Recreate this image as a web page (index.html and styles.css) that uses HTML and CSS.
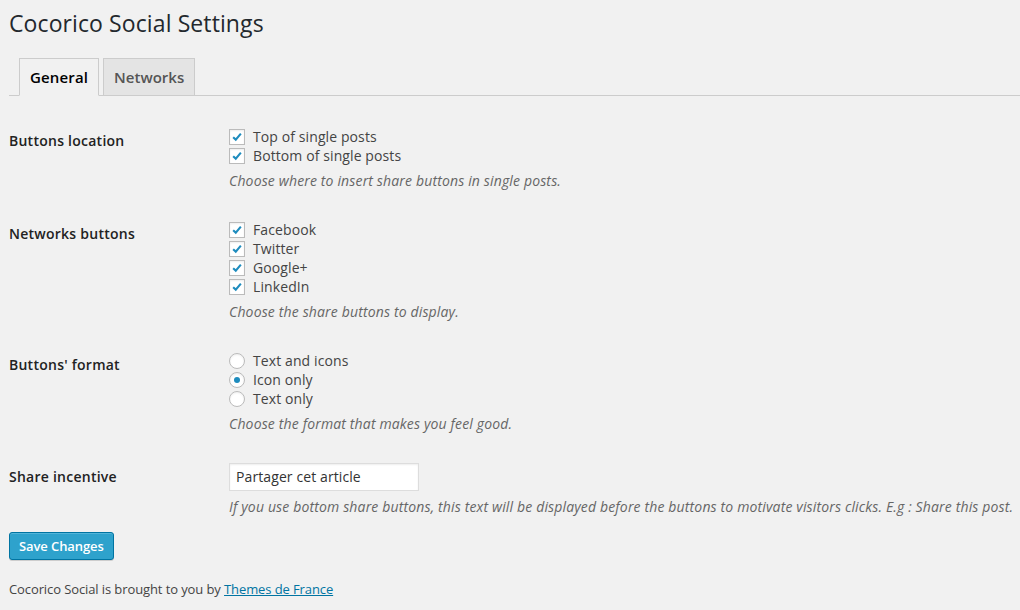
FILE: index.html
```html
<!DOCTYPE html>
<html>
<head>
<meta charset="utf-8">
<link rel="stylesheet" href="styles.css">
</head>
<body>
<div class="wrap">
  <h2 class="title">Cocorico Social Settings</h2>
  <div class="tabs">
    <span class="tab active">General</span>
    <span class="tab">Networks</span>
  </div>
  <table class="form-table">
    <tr>
      <th>Buttons location</th>
      <td>
        <div class="opt"><span class="cb"><svg viewBox="0 0 16 16"><path d="M3.6 8.2 L6.6 11 L12.4 4.2" /></svg></span>Top of single posts</div>
        <div class="opt"><span class="cb"><svg viewBox="0 0 16 16"><path d="M3.6 8.2 L6.6 11 L12.4 4.2" /></svg></span>Bottom of single posts</div>
        <p class="desc">Choose where to insert share buttons in single posts.</p>
      </td>
    </tr>
    <tr>
      <th>Networks buttons</th>
      <td>
        <div class="opt"><span class="cb"><svg viewBox="0 0 16 16"><path d="M3.6 8.2 L6.6 11 L12.4 4.2" /></svg></span>Facebook</div>
        <div class="opt"><span class="cb"><svg viewBox="0 0 16 16"><path d="M3.6 8.2 L6.6 11 L12.4 4.2" /></svg></span>Twitter</div>
        <div class="opt"><span class="cb"><svg viewBox="0 0 16 16"><path d="M3.6 8.2 L6.6 11 L12.4 4.2" /></svg></span>Google+</div>
        <div class="opt"><span class="cb"><svg viewBox="0 0 16 16"><path d="M3.6 8.2 L6.6 11 L12.4 4.2" /></svg></span>LinkedIn</div>
        <p class="desc">Choose the share buttons to display.</p>
      </td>
    </tr>
    <tr>
      <th>Buttons' format</th>
      <td>
        <div class="opt"><span class="rb"></span>Text and icons</div>
        <div class="opt"><span class="rb on"></span>Icon only</div>
        <div class="opt"><span class="rb"></span>Text only</div>
        <p class="desc">Choose the format that makes you feel good.</p>
      </td>
    </tr>
    <tr>
      <th>Share incentive</th>
      <td>
        <div class="input">Partager cet article</div>
        <p class="desc desc-input">If you use bottom share buttons, this text will be displayed before the buttons to motivate visitors clicks. E.g : Share this post.</p>
      </td>
    </tr>
  </table>
  <div class="submit"><span class="button">Save Changes</span></div>
  <p class="footer">Cocorico Social is brought to you by <a href="#">Themes de France</a></p>
</div>
</body>
</html>
```
FILE: styles.css
```css
html, body {
  margin: 0;
  padding: 0;
  background: #f1f1f1;
}
body {
  font-family: "Open Sans", "Liberation Sans", sans-serif;
  color: #444;
  font-size: 13px;
}
.wrap {
  padding: 0 0 0 9px;
}
.title {
  margin: 0;
  padding: 9px 15px 4px 0;
  font-size: 23px;
  font-weight: 400;
  line-height: 29px;
  color: #23282d;
  letter-spacing: 0.1px;
}
.tabs {
  display: flex;
  gap: 4px;
  padding: 16px 0 0 10px;
  border-bottom: 1px solid #ccc;
}
.tab {
  display: block;
  padding: 6px 10px;
  font-size: 15px;
  font-weight: 600;
  line-height: 24px;
  border: 1px solid #ccc;
  background: #e4e4e4;
  color: #555;
  margin-bottom: -1px;
}
.tab.active {
  background: #f1f1f1;
  color: #000;
  border-bottom-color: #f1f1f1;
  letter-spacing: 0.15px;
}
.form-table {
  border-collapse: collapse;
  margin-top: 16px;
  width: 1011px;
}
.form-table th {
  width: 200px;
  padding: 20px 10px 20px 0;
  text-align: left;
  vertical-align: top;
  font-size: 14px;
  font-weight: 600;
  line-height: 1.3;
  color: #222;
  letter-spacing: 0.25px;
}
.form-table td {
  padding: 15px 0 15px 10px;
  vertical-align: top;
  font-size: 14px;
}
.opt {
  display: flex;
  align-items: center;
  height: 19px;
  line-height: 19px;
  color: #444;
  letter-spacing: 0.1px;
}
.cb, .rb {
  box-sizing: border-box;
  width: 16px;
  height: 16px;
  border: 1px solid #bbb;
  background: #fff;
  margin-right: 8px;
  flex: none;
  box-shadow: inset 0 1px 2px rgba(0,0,0,0.07);
  display: flex;
  align-items: center;
  justify-content: center;
}
.cb svg {
  width: 14px;
  height: 14px;
  fill: none;
  stroke: #1e8cbe;
  stroke-width: 2.4;
}
.rb {
  border-radius: 50%;
}
.rb.on::before {
  content: "";
  width: 6px;
  height: 6px;
  border-radius: 50%;
  background: #1e8cbe;
}
.desc {
  margin: 6px 0 0;
  font-size: 14px;
  line-height: 19px;
  font-style: italic;
  color: #666;
  letter-spacing: 0.15px;
  white-space: nowrap;
}
.desc-input {
  margin-top: 6px;
}
.input {
  box-sizing: border-box;
  width: 190px;
  height: 28px;
  border: 1px solid #ddd;
  background: #fff;
  padding: 0 6px;
  line-height: 26px;
  font-size: 14px;
  color: #333;
  box-shadow: inset 0 1px 2px rgba(0,0,0,0.07);
  letter-spacing: 0.1px;
}
.submit {
  display: flex;
  margin-top: 1px;
}
.button {
  box-sizing: border-box;
  height: 28px;
  padding: 0 9px;
  line-height: 26px;
  white-space: nowrap;
  text-align: center;
  font-size: 13px;
  font-weight: 600;
  letter-spacing: -0.1px;
  color: #fff;
  background: #2ea2cc;
  border: 1px solid #0074a2;
  border-radius: 3px;
  box-shadow: inset 0 1px 0 rgba(120,200,230,0.5), 0 1px 0 rgba(0,0,0,0.15);
}
.footer {
  margin: 20px 0 0;
  line-height: 18px;
  font-size: 13px;
  color: #444;
  letter-spacing: -0.1px;
}
.footer a {
  color: #0074a2;
  text-decoration: underline;
}
```
